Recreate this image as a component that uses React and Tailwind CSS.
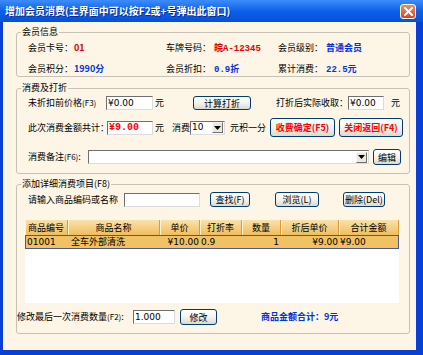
import React from "react";

const Btn = ({ children, className = "" }) => (
  <div
    className={
      "flex shrink-0 items-center justify-center rounded-[3px] border border-[#003c74] bg-linear-to-b from-white via-[#f4f3ee] to-[#dcd9cc] text-[9px] leading-none " +
      className
    }
  >
    {children}
  </div>
);

const Box = ({ children, className = "" }) => (
  <div
    className={
      "flex shrink-0 items-center bg-white border border-t-[#6f6f6f] border-l-[#6f6f6f] border-r-[#dcdcdc] border-b-[#dcdcdc] pl-[1px] text-[9px] leading-none font-['DejaVu_Sans',sans-serif] " +
      className
    }
  >
    {children}
  </div>
);

const Arrow = () => (
  <div className="ml-auto mr-px flex h-[11px] w-[11px] items-center justify-center border border-t-[#f4f4f4] border-l-[#f4f4f4] border-r-[#6f6f6f] border-b-[#6f6f6f] bg-[#ece9d8]">
    <svg width="7" height="4" viewBox="0 0 7 4">
      <path d="M0 0H7L3.5 4Z" fill="#000" />
    </svg>
  </div>
);

const Group = ({ title, className = "", children }) => (
  <fieldset className={"min-w-0 rounded-[3px] border border-[#c6c2b6] " + className}>
    <legend className="ml-[4px] px-px text-[9px] leading-[12px] text-black">{title}</legend>
    {children}
  </fieldset>
);

const L = ({ className = "", children }) => (
  <span className={"min-w-0 shrink-0 whitespace-nowrap " + className}>{children}</span>
);

const cols = [
  ["商品编号", "w-[43px]"],
  ["商品名称", "w-[92px]"],
  ["单价", "w-[40px]"],
  ["打折率", "w-[42px]"],
  ["数量", "w-[39px]"],
  ["折后单价", "w-[58px]"],
  ["合计金额", "w-[60px]"],
];

export default function App() {
  return (
    <div className="flex h-[355px] w-[423px] flex-col whitespace-nowrap bg-[#0a3fd6] font-['Noto_Sans_CJK_SC',sans-serif] text-black">
      {/* title bar */}
      <div className="flex h-[22px] items-center bg-linear-to-b from-[#3c8dfa] via-[#0d5fe8] to-[#0650dc]">
        <span className="pl-[5px] text-[10px] font-bold leading-none text-white [text-shadow:1px_1px_0_#0b2a8a]">
          增加会员消费(主界面中可以按F2或+号弹出此窗口)
        </span>
        <div className="ml-auto mr-[7px] flex h-[15px] w-[16px] items-center justify-center rounded-[3px] border border-white bg-linear-to-b from-[#f08a6a] to-[#d8441c]">
          <svg width="9" height="9" viewBox="0 0 9 9">
            <path d="M1 1L8 8M8 1L1 8" stroke="#fff" strokeWidth="2" strokeLinecap="square" />
          </svg>
        </div>
      </div>

      {/* body */}
      <div className="flex flex-1 pb-[5px] pl-[3px] pr-[7px]">
        <div className="flex-1 bg-[#fdf6e6] pl-[13px] pr-[6px] pt-[4px] text-[9px] leading-[12px]">
          {/* 会员信息 */}
          <Group title="会员信息" className="h-[51px]">
            <div className="grid grid-cols-[138px_112px_1fr] gap-y-[8px] pl-[11px] pt-[4px]">
              <div className="flex">
                <L className="w-[46px]">会员卡号：</L>
                <L className="font-bold text-[#e00000]">01</L>
              </div>
              <div className="flex">
                <L className="w-[48px]">车牌号码：</L>
                <L className="font-bold text-[#e00000]">
                  皖<span className="font-['Liberation_Mono',monospace]">A-12345</span>
                </L>
              </div>
              <div className="flex">
                <L className="w-[48px]">会员级别：</L>
                <L className="font-bold text-[#0033dd]">普通会员</L>
              </div>
              <div className="flex">
                <L className="w-[46px]">会员积分：</L>
                <L className="font-bold text-[#0033dd]">1990分</L>
              </div>
              <div className="flex">
                <L className="w-[48px]">会员折扣：</L>
                <L className="font-bold text-[#0033dd]">
                  <span className="font-['Liberation_Mono',monospace]">0.9</span>折
                </L>
              </div>
              <div className="flex">
                <L className="w-[48px]">累计消费：</L>
                <L className="font-bold text-[#0033dd]">
                  <span className="font-['Liberation_Mono',monospace]">22.5</span>元
                </L>
              </div>
            </div>
          </Group>

          {/* 消费及打折 */}
          <Group title="消费及打折" className="mt-[5px] h-[92px]">
            <div className="flex flex-col pl-[11px] pt-[2px]">
              <div className="flex h-[14px] items-center">
                <L className="w-[78px]">
                  未折扣前价格<span className="text-[8px]">(F3)</span>
                </L>
                <Box className="h-[14px] w-[47px]">¥0.00</Box>
                <L className="w-[40px] pl-[2px]">元</L>
                <Btn className="h-[14px] w-[58px]">计算打折</Btn>
                <L className="w-[25px]" />
                <L className="w-[72px]">打折后实际收取：</L>
                <Box className="h-[14px] w-[36px]">¥0.00</Box>
                <L className="pl-[7px]">元</L>
              </div>
              <div className="mt-[8px] flex h-[19px] items-center">
                <L className="w-[79px]">此次消费金额共计：</L>
                <Box className="h-[14px] w-[46px] font-bold text-[#ff0000]">
                  <span className="font-['Liberation_Mono',monospace] text-[10px]">¥9.00</span>
                </Box>
                <L className="w-[19px] pl-[2px]">元</L>
                <L className="w-[18px]">消费</L>
                <Box className="h-[14px] w-[35px]">
                  10
                  <Arrow />
                </Box>
                <L className="w-[45px] pl-[5px]">元积一分</L>
                <Btn className="h-[19px] w-[65px] font-bold text-[#ff0000]">收费确定(F5)</Btn>
                <Btn className="ml-[4px] h-[19px] w-[64px] font-bold text-[#ff0000]">关闭返回(F4)</Btn>
              </div>
              <div className="mt-[12px] flex h-[16px] items-center">
                <L className="w-[60px]">
                  消费备注<span className="text-[8px]">(F6)</span>:
                </L>
                <Box className="h-[14px] w-[281px]">
                  <Arrow />
                </Box>
                <Btn className="ml-[4px] h-[16px] w-[28px]">编辑</Btn>
              </div>
            </div>
          </Group>

          {/* 添加详细消费项目 */}
          <Group title="添加详细消费项目(F8)" className="mt-[4px] h-[156px]">
            <div className="flex flex-col pt-[2px]">
              <div className="flex h-[15px] items-center pl-[11px]">
                <L className="w-[96px]">请输入商品编码或名称</L>
                <Box className="h-[14px] w-[76px]" />
                <Btn className="ml-[10px] h-[15px] w-[40px]">查找(F)</Btn>
                <Btn className="ml-[25px] h-[15px] w-[44px]">浏览(L)</Btn>
                <Btn className="ml-[24px] h-[15px] w-[42px]">删除(Del)</Btn>
              </div>

              <div className="ml-[8px] mt-[13px] h-[83px] w-[374px] bg-white">
                <div className="flex h-[15px] bg-linear-to-b from-[#fbe2a8] to-[#efbd5c]">
                  {cols.map(([t, w]) => (
                    <div
                      key={t}
                      className={
                        "flex items-center justify-center border-r border-[#d99a3a] shadow-[inset_1px_0_0_#fff3d0] " + w
                      }
                    >
                      {t}
                    </div>
                  ))}
                </div>
                <div className="flex h-[14px] border border-[#4a5a8c] bg-[#f0c263] font-['DejaVu_Sans',sans-serif] text-[9px]">
                  <div className="w-[42px] pl-px">01001</div>
                  <div className="w-[92px] pl-[3px] font-['Noto_Sans_CJK_SC',sans-serif]">全车外部清洗</div>
                  <div className="w-[40px] pr-[1px] text-right">¥10.00</div>
                  <div className="w-[42px] pl-px">0.9</div>
                  <div className="w-[39px] pr-[2px] text-right">1</div>
                  <div className="w-[58px] pr-[1px] text-right">¥9.00</div>
                  <div className="w-[59px] pl-px">¥9.00</div>
                </div>
              </div>

              <div className="mt-[6px] flex h-[16px] items-center">
                <L className="w-[116px]">
                  修改最后一次消费数量<span className="text-[8px]">(F2)</span>:
                </L>
                <Box className="h-[14px] w-[42px]">1.000</Box>
                <Btn className="ml-[5px] h-[16px] w-[37px]">修改</Btn>
                <L className="ml-[44px] font-bold text-[#0033dd]">商品金额合计：9元</L>
              </div>
            </div>
          </Group>
        </div>
      </div>
    </div>
  );
}
